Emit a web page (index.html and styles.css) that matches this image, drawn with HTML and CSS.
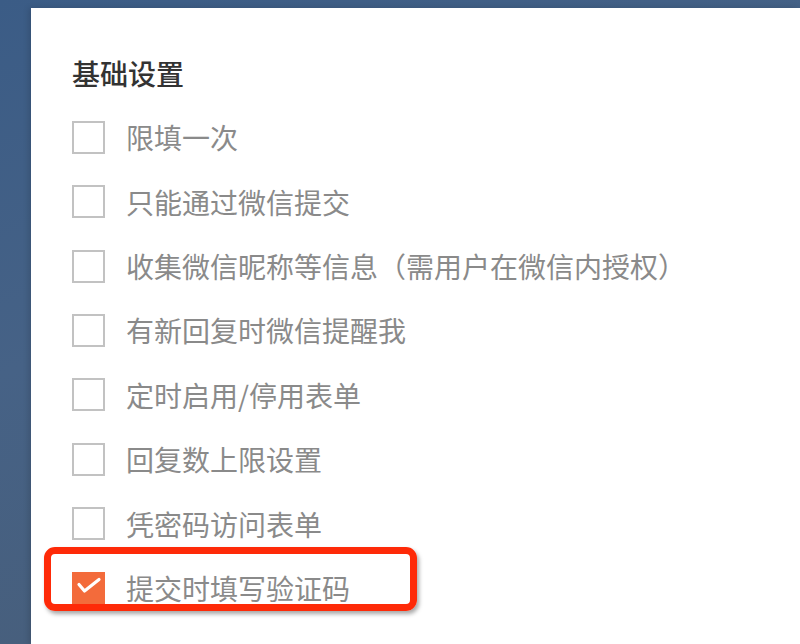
FILE: index.html
```html
<!DOCTYPE html>
<html lang="zh-CN">
<head>
<meta charset="utf-8">
<title>基础设置</title>
<link rel="stylesheet" href="styles.css">
</head>
<body>
<div class="panel">
  <h2 class="title">基础设置</h2>
  <ul class="options">
    <li class="option"><span class="box"></span><span class="label">限填一次</span></li>
    <li class="option"><span class="box"></span><span class="label">只能通过微信提交</span></li>
    <li class="option"><span class="box"></span><span class="label">收集微信昵称等信息（需用户在微信内授权）</span></li>
    <li class="option"><span class="box"></span><span class="label">有新回复时微信提醒我</span></li>
    <li class="option"><span class="box"></span><span class="label">定时启用/停用表单</span></li>
    <li class="option"><span class="box"></span><span class="label">回复数上限设置</span></li>
    <li class="option"><span class="box"></span><span class="label">凭密码访问表单</span></li>
    <li class="option highlighted">
      <span class="box checked">
        <svg viewBox="0 0 33 33" width="33" height="33"><path d="M7 12.5 L12.5 19 L27 7.5" fill="none" stroke="#fff" stroke-width="3.2" stroke-linecap="round" stroke-linejoin="round"/></svg>
      </span>
      <span class="label">提交时填写验证码</span>
      <span class="mark"></span>
    </li>
  </ul>
</div>
</body>
</html>
```
FILE: styles.css
```css
html, body {
  margin: 0;
  padding: 0;
  height: 100%;
}
body {
  background: linear-gradient(160deg, #3b5c86 0%, #466286 40%, #485c74 100%);
  overflow: hidden;
  font-family: "Noto Sans CJK SC", "Noto Sans", sans-serif;
}
.panel {
  margin: 8px 0 0 31px;
  height: 636px;
  background: #fff;
  padding: 51px 0 0 41px;
  box-sizing: border-box;
  box-shadow: -2px 0 6px rgba(0,0,0,0.15);
}
.title {
  margin: 0;
  font-size: 28px;
  line-height: 28px;
  font-weight: 500;
  color: #333;
}
.options {
  list-style: none;
  margin: 18px 0 0 0;
  padding: 0;
}
.option {
  position: relative;
  display: flex;
  align-items: center;
  height: 64.43px;
}
.box {
  width: 33px;
  height: 33px;
  box-sizing: border-box;
  border: 2px solid #c2c2c2;
  flex: none;
  position: relative;
}
.box.checked {
  background: #f36b3b;
  border-color: #f36b3b;
}
.box.checked svg {
  position: absolute;
  left: -2px;
  top: -2px;
}
.label {
  margin-left: 21px;
  font-size: 28px;
  line-height: 32px;
  color: #8a8a8a;
  white-space: nowrap;
}
.mark {
  position: absolute;
  left: -28px;
  top: -9px;
  width: 373px;
  height: 64px;
  box-sizing: border-box;
  border: 7px solid #fe2a08;
  border-radius: 11px;
  box-shadow: 2px 3px 4px rgba(0,0,0,0.35);
}
```
